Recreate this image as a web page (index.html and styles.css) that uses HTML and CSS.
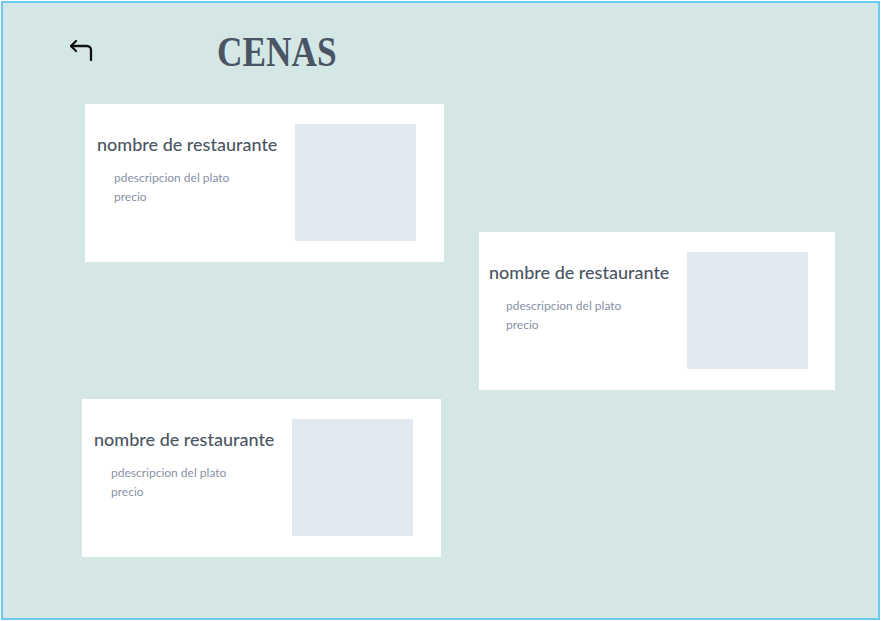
FILE: index.html
```html
<!DOCTYPE html>
<html lang="es">
<head>
<meta charset="utf-8">
<title>Cenas</title>
<link rel="stylesheet" href="styles.css">
</head>
<body>
<div class="frame">
  <header class="header">
    <svg class="back" width="24" height="22" viewBox="0 0 24 22" fill="none" stroke="#111" stroke-width="2.3" stroke-linecap="round" stroke-linejoin="round">
      <path d="M6 1 L1 6 L6 11"/>
      <path d="M1 6 H17 A4 4 0 0 1 21 10 V20"/>
    </svg>
    <h1 class="title">CENAS</h1>
  </header>
  <main class="list">
    <section class="card card-a">
      <div class="info">
        <h2 class="name">nombre de restaurante</h2>
        <p class="line">pdescripcion del plato</p>
        <p class="line">precio</p>
      </div>
      <div class="photo"></div>
    </section>
    <section class="card card-b">
      <div class="info">
        <h2 class="name">nombre de restaurante</h2>
        <p class="line">pdescripcion del plato</p>
        <p class="line">precio</p>
      </div>
      <div class="photo"></div>
    </section>
    <section class="card card-c">
      <div class="info">
        <h2 class="name">nombre de restaurante</h2>
        <p class="line">pdescripcion del plato</p>
        <p class="line">precio</p>
      </div>
      <div class="photo"></div>
    </section>
  </main>
</div>
</body>
</html>
```
FILE: styles.css
```css
html, body {
  margin: 0;
  padding: 0;
  background: #ffffff;
}
.frame {
  box-sizing: border-box;
  margin: 1px;
  width: 879px;
  height: 619px;
  border: 2px solid #6ccaee;
  background: #d4e7e5;
  overflow: hidden;
}
.header {
  display: flex;
  align-items: flex-start;
  padding-left: 67px;
  padding-top: 36px;
  height: 66px;
  box-sizing: border-box;
}
.back {
  display: block;
  margin-top: 1px;
}
.title {
  margin: -11px 0 0 123px;
  font-family: "Liberation Serif", serif;
  font-weight: 700;
  font-size: 42px;
  line-height: 48px;
  color: #4a5563;
  transform: scaleX(0.84);
  transform-origin: left center;
}
.list {
  display: flex;
  flex-direction: column;
  align-items: flex-start;
  padding-top: 35px;
}
.card {
  box-sizing: border-box;
  display: flex;
  background: #ffffff;
  height: 158px;
  padding: 20px 28px 21px 12px;
  font-family: Lato, "Noto Sans", sans-serif;
}
.card-a {
  width: 359px;
  margin-left: 82px;
}
.card-b {
  width: 356px;
  margin-left: 476px;
  margin-top: -30px;
  padding-left: 10px;
  padding-right: 27px;
}
.card-c {
  width: 359px;
  margin-left: 79px;
  margin-top: 9px;
}
.info {
  flex: 1;
}
.name {
  margin: 6px 0 0 0;
  font-size: 18px;
  line-height: 28px;
  font-weight: 500;
  color: #4b5563;
  white-space: nowrap;
}
.line {
  margin: 0;
  padding-left: 17px;
  font-size: 12px;
  line-height: 19px;
  color: #8792a6;
}
.name + .line {
  margin-top: 10px;
}
.photo {
  width: 121px;
  height: 117px;
  background: #e2e8f0;
  flex: none;
}
```
